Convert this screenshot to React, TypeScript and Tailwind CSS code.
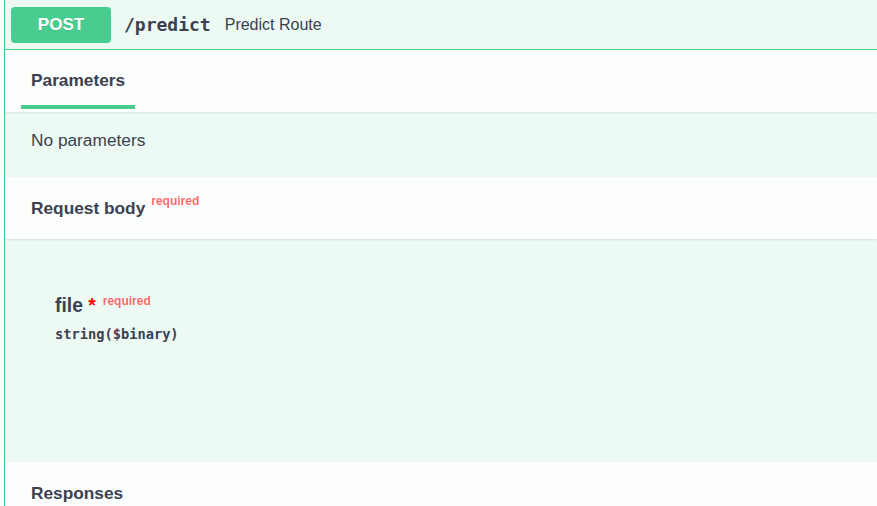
const ink = "text-[#3b4151]";

const SectionHeader = ({ children }: { children: React.ReactNode }) => (
  <div className="relative z-10 h-[62px] bg-[#fbfefd] pl-[26px] pt-[20px] shadow-[0_1px_2px_rgba(0,0,0,0.1)]">
    {children}
  </div>
);

export default function App() {
  return (
    <div className="h-[506px] w-full overflow-hidden bg-white font-['Liberation_Sans',Arial,sans-serif]">
      <div className="ml-[4px] border-l border-[#49cc90] bg-[#edfaf4]">
        {/* summary */}
        <div className="flex h-[50px] items-center border-b border-[#49cc90] pl-[6px]">
          <div className="flex h-[36px] w-[100px] items-center justify-center rounded-[4px] bg-[#49cc90] text-[17px] font-bold text-white [text-shadow:0_1px_0_rgba(0,0,0,0.1)]">
            POST
          </div>
          <span className={`ml-[13px] font-['DejaVu_Sans_Mono',monospace] text-[18px] font-bold ${ink}`}>
            /predict
          </span>
          <span className={`ml-[14px] text-[16px] ${ink}`}>Predict Route</span>
        </div>

        {/* tabs */}
        <div className="relative z-10 h-[62px] bg-[#fbfefd] pt-[19px] shadow-[0_1px_2px_rgba(0,0,0,0.1)]">
          <div className="ml-[16px] inline-flex flex-col">
            <span className={`px-[10px] text-[17.3px] leading-[20px] font-bold ${ink}`}>Parameters</span>
            <div className="mt-[15px] h-[4px] bg-[#49cc90]" />
          </div>
        </div>

        <div className={`h-[65px] pl-[26px] pt-[18px] text-[17.3px] leading-[20px] ${ink}`}>No parameters</div>

        <SectionHeader>
          <span className={`text-[17.3px] leading-[20px] font-bold ${ink}`}>Request body</span>
          <span className="relative -top-[9px] pl-[6px] text-[12px] font-bold text-[rgba(255,0,0,0.6)]">required</span>
        </SectionHeader>

        <div className="h-[223px] pl-[50px] pt-[57px]">
          <div className={`text-[19.3px] leading-[20px] font-bold ${ink}`}>
            file <span className="text-[#ff0000]">*</span>
            <span className="relative -top-[7px] pl-[7px] text-[12px] font-bold text-[rgba(255,0,0,0.6)]">required</span>
          </div>
          <div className={`mt-[8px] font-['DejaVu_Sans_Mono',monospace] text-[13.7px] leading-[16px] font-bold ${ink}`}>
            string($binary)
          </div>
        </div>

        <SectionHeader>
          <span className={`text-[17.3px] leading-[20px] font-bold ${ink}`}>Responses</span>
        </SectionHeader>
      </div>
    </div>
  );
}
